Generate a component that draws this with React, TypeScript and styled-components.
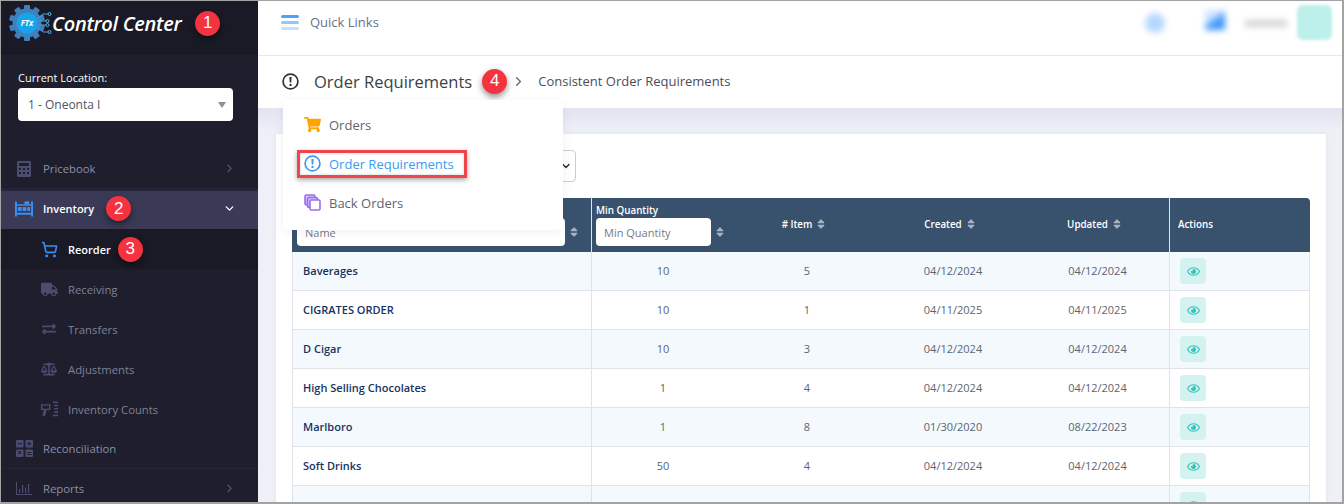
import React from 'react';
import styled, { createGlobalStyle } from 'styled-components';
import { ChevronDown, ChevronRight, ShoppingCart } from 'lucide-react';
import { FaBalanceScale, FaExchangeAlt, FaRegEye, FaShoppingCart, FaSort, FaTruck } from 'react-icons/fa';

const GlobalStyle = createGlobalStyle`
  html, body {
    margin: 0;
    padding: 0;
    background: #fff;
    font-family: "Open Sans", "Noto Sans", sans-serif;
  }
  * {
    box-sizing: border-box;
  }
`;

const Screen = styled.div`
  position: relative;
  display: flex;
  width: 1344px;
  height: 504px;
  overflow: hidden;
  border: 1px solid #a3a3a3;
  border-width: 1px 2px 2px 1px;
`;

const Sidebar = styled.aside`
  flex: 0 0 257px;
  display: flex;
  flex-direction: column;
  background: #1e1e2d;
`;

const Brand = styled.div`
  flex: 0 0 54px;
  display: flex;
  align-items: center;
  padding: 0 0 10px 8px;
  background: #1a1a27;
`;

const BrandName = styled.span`
  margin-left: -1px;
  color: #fff;
  font-size: 20px;
  font-style: italic;
  font-weight: 600;
  letter-spacing: -0.3px;
`;

const Badge = styled.span<{ $left: number }>`
  flex: none;
  display: flex;
  align-items: center;
  justify-content: center;
  width: 25px;
  height: 25px;
  margin-left: ${(p) => p.$left}px;
  border-radius: 50%;
  background: #f5333f;
  color: #fff;
  font-family: "Liberation Sans", Arial, sans-serif;
  font-size: 17px;
  font-weight: 400;
  box-shadow: 0 3px 6px rgba(0, 0, 0, 0.45);
`;

const Location = styled.div`
  flex: none;
  display: flex;
  flex-direction: column;
  height: 94px;
  padding: 15px 25px 0 17px;
`;

const LocationLabel = styled.label`
  color: #fff;
  font-size: 11px;
  line-height: 15px;
  margin-bottom: 3px;
`;

const LocationSelect = styled.div`
  display: flex;
  align-items: center;
  justify-content: space-between;
  height: 33px;
  padding: 0 7px 0 10px;
  border-radius: 4px;
  background: #fff;
  color: #4a5568;
  font-size: 12px;
`;

const Caret = styled.span`
  width: 0;
  height: 0;
  border-left: 4px solid transparent;
  border-right: 4px solid transparent;
  border-top: 6px solid #8a8f99;
`;

const Nav = styled.nav`
  flex: none;
  display: flex;
  flex-direction: column;
`;

const NavItem = styled.div<{ $active?: boolean }>`
  display: flex;
  align-items: center;
  height: ${(p) => (p.$active ? 38 : 39)}px;
  padding: 0 22px ${(p) => (p.$active ? 3 : 0)}px 14px;
  background: ${(p) => (p.$active ? '#3a3a57' : 'transparent')};
  color: ${(p) => (p.$active ? '#fff' : '#8d8fa8')};
  font-size: ${(p) => (p.$active ? 11 : 11.3)}px;
  font-weight: ${(p) => (p.$active ? 600 : 400)};
`;

const SubItem = styled.div<{ $active?: boolean }>`
  display: flex;
  align-items: center;
  height: 40px;
  padding-left: 39px;
  background: ${(p) => (p.$active ? '#1a1a27' : 'transparent')};
  color: ${(p) => (p.$active ? '#fff' : '#7f8199')};
  font-size: ${(p) => (p.$active ? 11 : 11.3)}px;
  font-weight: ${(p) => (p.$active ? 600 : 400)};
`;

const NavIcon = styled.span<{ $color?: string }>`
  flex: none;
  display: flex;
  align-items: center;
  justify-content: center;
  width: 18px;
  height: 18px;
  margin-right: 10px;
  color: ${(p) => p.$color || '#4b4d70'};
`;

const NavLabel = styled.span`
  white-space: nowrap;
`;

const NavArrow = styled.span<{ $color?: string }>`
  margin-left: auto;
  display: flex;
  color: ${(p) => p.$color || '#54566f'};
`;

const NavRule = styled.div<{ $size?: number }>`
  height: ${(p) => p.$size || 1}px;
  background: #25253a;
`;

const Main = styled.main`
  flex: 1;
  display: flex;
  flex-direction: column;
  min-width: 0;
  background: #eef0f8;
`;

const TopBar = styled.header`
  flex: 0 0 55px;
  display: flex;
  align-items: flex-start;
  padding: 6px 10px 0 23px;
  border-bottom: 1px solid #e8e8ec;
  background: #fff;
`;

const QuickLinks = styled.div`
  display: flex;
  align-items: center;
  height: 30px;
  gap: 11px;
  color: #6a7189;
  font-size: 13px;
`;

const Burger = styled.span`
  display: flex;
  flex-direction: column;
  gap: 3px;
  width: 18px;

  i {
    height: 3px;
    border-radius: 2px;
    background: #4aa3f5;
  }
  i:nth-child(2) {
    background: #90c8f9;
  }
  i:nth-child(3) {
    background: #c4e1fc;
  }
`;

const TopRight = styled.div`
  margin-left: auto;
  display: flex;
  align-items: flex-start;
`;

const BlurDot = styled.span`
  width: 20px;
  height: 20px;
  margin: 6px 0 0;
  border-radius: 50%;
  background: #b5d8fd;
  filter: blur(3px);
`;

const BlurFlag = styled.span`
  width: 20px;
  height: 20px;
  margin: 3px 0 0 40px;
  background: linear-gradient(145deg, #cfe5ff 35%, #3d96fb 60%);
  filter: blur(3px);
`;

const BlurName = styled.span`
  width: 42px;
  height: 7px;
  margin: 13px 0 0 20px;
  background: #d4d4d8;
  filter: blur(3px);
`;

const BlurAvatar = styled.span`
  width: 35px;
  height: 35px;
  margin: -2px 0 0 10px;
  border-radius: 6px;
  background: #bdf0ea;
  filter: blur(1.5px);
`;

const SubHeader = styled.div`
  flex: 0 0 52px;
  display: flex;
  align-items: center;
  padding: 0 0 2px 24px;
  background: #fff;
`;

const TitleIcon = styled.span`
  display: flex;
  margin-right: 15px;
  color: #2f3136;
`;

const PageTitle = styled.h1`
  margin: 0;
  color: #3b3f46;
  font-size: 16.5px;
  font-weight: 500;
`;

const Crumb = styled.span`
  margin-left: 12px;
  color: #4a4e57;
  font-size: 13px;
`;

const CrumbArrow = styled.span`
  display: flex;
  margin-left: 4px;
  color: #70737b;
`;

const Body = styled.div`
  flex: 1;
  min-height: 0;
  padding: 26px 16px 0 18px;
  background: linear-gradient(#e1e3ef, #eef0f8 24px);
`;

const Card = styled.section`
  height: 500px;
  padding: 16px 16px 0;
  background: #fff;
  box-shadow: 0 0 4px rgba(90, 90, 130, 0.1);
`;

const FilterRow = styled.div`
  height: 48px;
`;

const FilterSelect = styled.div`
  display: flex;
  align-items: center;
  justify-content: flex-end;
  width: 284px;
  height: 32px;
  padding-right: 3px;
  border: 1px solid #c9ccd2;
  border-radius: 4px;
  color: #2d3036;
`;

const Table = styled.table`
  width: 1018px;
  table-layout: fixed;
  border-collapse: separate;
  border-spacing: 0;
`;

const HeadCell = styled.th<{ $divided?: boolean }>`
  height: 54px;
  padding: 0 9px 2px 4px;
  background: #38526e;
  border-right: ${(p) => (p.$divided ? '1px solid #dfe5eb' : 'none')};
  color: #fff;
  font-size: 9.8px;
  font-weight: 600;
  text-align: center;
  vertical-align: middle;
`;

const FilterHeadCell = styled(HeadCell)<{ $inset: number }>`
  padding: 0 0 0 ${(p) => p.$inset}px;
  text-align: left;
`;

const ActionsHeadCell = styled(HeadCell)`
  padding-left: 8px;
  border-top-right-radius: 4px;
  text-align: left;
`;

const FilterLabel = styled.div`
  margin-bottom: 1px;
  line-height: 13px;
`;

const FilterLine = styled.div`
  display: flex;
  align-items: center;
`;

const FilterInput = styled.div<{ $width: number }>`
  display: flex;
  align-items: center;
  width: ${(p) => p.$width}px;
  height: 28px;
  padding-left: 8px;
  border-radius: 4px;
  background: #fff;
  color: #757a84;
  font-size: 11px;
  font-weight: 400;
`;

const SortMark = styled(FaSort)`
  flex: none;
  margin-left: 3px;
  color: #a7b3c0;
  font-size: 12px;
  vertical-align: -2px;
`;

const Row = styled.tr<{ $odd: boolean }>`
  td {
    background: ${(p) => (p.$odd ? '#f4f9fd' : '#fff')};
  }
`;

const Cell = styled.td<{ $divided?: boolean }>`
  height: 39px;
  padding: 0 0 2px;
  border-bottom: 1px solid #e0e3e8;
  border-right: ${(p) => (p.$divided ? '1px solid #e0e3e8' : 'none')};
  color: #5d6470;
  font-size: 11px;
  text-align: center;
`;

const NameCell = styled(Cell)`
  padding-left: 10px;
  border-left: 1px solid #e0e3e8;
  color: #17325f;
  font-weight: 600;
  text-align: left;
`;

const ActionCell = styled(Cell)`
  padding: 0 0 0 10px;
  text-align: left;
`;

const ViewButton = styled.button`
  display: flex;
  align-items: center;
  justify-content: center;
  width: 26px;
  height: 26px;
  padding: 0;
  border: none;
  border-radius: 4px;
  background: #d3f2f0;
  color: #35c4bb;
  font-size: 13px;
`;

const Menu = styled.div`
  position: absolute;
  left: 282px;
  top: 99px;
  display: flex;
  flex-direction: column;
  width: 280px;
  height: 130px;
  padding-top: 5px;
  border-radius: 6px;
  background: #fff;
  box-shadow: 0 2px 8px rgba(70, 70, 110, 0.08);
`;

const MenuItem = styled.div<{ $active?: boolean }>`
  position: relative;
  display: flex;
  align-items: center;
  height: 39px;
  padding-left: 20px;
  color: ${(p) => (p.$active ? '#3a9bf5' : '#60646e')};
  font-size: 13px;
  font-weight: ${(p) => (p.$active ? 500 : 400)};
`;

const MenuIcon = styled.span<{ $color: string }>`
  flex: none;
  display: flex;
  align-items: center;
  justify-content: center;
  width: 18px;
  height: 18px;
  margin-right: 8px;
  color: ${(p) => p.$color};
`;

const Highlight = styled.span`
  position: absolute;
  left: 14px;
  top: 6px;
  width: 170px;
  height: 28px;
  border: 3px solid #f0444f;
  box-shadow: 0 2px 5px rgba(0, 0, 0, 0.35), inset 0 0 3px rgba(0, 0, 0, 0.2);
`;

const AlertIcon = () => (
  <svg width="17" height="17" viewBox="0 0 17 17">
    <circle cx="8.5" cy="8.5" r="7.4" fill="none" stroke="currentColor" strokeWidth="1.7" />
    <path d="M7.4 3.9h2.2l-.3 5.6H7.7z" fill="currentColor" />
    <circle cx="8.5" cy="11.9" r="1.2" fill="currentColor" />
  </svg>
);

const LogoMark = () => (
  <svg width="44" height="40" viewBox="0 0 44 40">
    <g fill="#3f80bd">
      {[0, 36, 72, 108, 144, 180, 216, 252, 288, 324].map((a) => (
        <rect key={a} x="15" y="2" width="6" height="6" rx="1" transform={`rotate(${a} 18 20)`} />
      ))}
      <circle cx="18" cy="20" r="14.5" />
    </g>
    <circle cx="18" cy="20" r="10.5" fill="#16a5ea" />
    <text x="18" y="23" fill="#fff" fontSize="8" fontWeight="700" fontStyle="italic" textAnchor="middle">
      FTx
    </text>
    <g fill="none" stroke="#4f9fd8" strokeWidth="1">
      <path d="M28 16 L34 11 H39" />
      <path d="M29 18 H37" />
      <path d="M29 22 H37" />
      <path d="M28 24 L34 29 H39" />
    </g>
    <g fill="#1e1e2d" stroke="#57b4ea" strokeWidth="1">
      <circle cx="40.5" cy="11" r="1.5" />
      <circle cx="38.5" cy="18" r="1.5" />
      <circle cx="38.5" cy="22" r="1.5" />
      <circle cx="40.5" cy="29" r="1.5" />
    </g>
  </svg>
);

const CalculatorIcon = () => (
  <svg width="14" height="16" viewBox="0 0 14 16" fill="#4b4d70">
    <path
      d="M1.5 0h11A1.5 1.5 0 0 1 14 1.5v13a1.5 1.5 0 0 1-1.5 1.5h-11A1.5 1.5 0 0 1 0 14.5v-13A1.5 1.5 0 0 1 1.5 0zM2 2v3h10V2zM2 7v2h2V7zm4 0v2h2V7zm4 0v2h2V7zM2 11v2h2v-2zm4 0v2h2v-2zm4 0v2h2v-2z"
      fillRule="evenodd"
    />
  </svg>
);

const InventoryIcon = () => (
  <svg width="19" height="16" viewBox="0 0 19 16" fill="#3a8ff0">
    <path d="M0 0h2v16H0zM17 0h2v16h-2zM2 12h15v2H2zM2 3h15v1.6H2z" />
    <rect x="3" y="6" width="4" height="4" />
    <rect x="8" y="6" width="4" height="4" />
    <rect x="13" y="6" width="3" height="4" />
    <rect x="10" y="0" width="5" height="3" />
  </svg>
);

const ScannerIcon = () => (
  <svg width="19" height="16" viewBox="0 0 19 16" fill="#4b4d70">
    <path d="M1 3h10v6H7l-1.5 6H2.5L4 9H1z M2.5 4.3v3.4h7V4.3z" fillRule="evenodd" />
    <path d="M13.5 0H19v1.6h-5.5zM15 3.5h4v1.6h-4zM15 7h4v1.6h-4zM15 10.5h4v1.6h-4zM13.5 14H19v1.6h-5.5z" />
  </svg>
);

const ReconcileIcon = () => (
  <svg width="17" height="17" viewBox="0 0 17 17" fill="#4b4d70">
    <rect width="7.5" height="7.5" rx="1" />
    <rect x="9.5" width="7.5" height="7.5" rx="1" />
    <rect y="9.5" width="7.5" height="7.5" rx="1" />
    <rect x="9.5" y="9.5" width="7.5" height="7.5" rx="1" />
    <path d="M1.5 3.2h4.5v1H1.5zM12.7 1.5h1v1.8h1.8v1h-1.8v1.8h-1V4.3h-1.8v-1h1.8zM11 12h4.5v1H11zM11 14h4.5v1H11zM2 11.5l.7-.7 1 1 1-1 .7.7-1 1 1 1-.7.7-1-1-1 1-.7-.7 1-1z" fill="#1e1e2d" />
  </svg>
);

const ChartIcon = () => (
  <svg width="16" height="13" viewBox="0 0 16 13" fill="#4b4d70">
    <path d="M0 0h1v12h15v1H0z" />
    <path d="M3 7h1.2v4H3zM6 3h1.2v8H6zM9 5.5h1.2V11H9zM12 2h1.2v9H12z" />
  </svg>
);

const BackOrdersIcon = () => (
  <svg width="17" height="17" viewBox="0 0 17 17" fill="none" stroke="#9a6cf0" strokeWidth="1.6">
    <rect x="1" y="1" width="10" height="10" rx="1.5" fill="#d9c8fb" />
    <rect x="3.5" y="3.5" width="10" height="10" rx="1.5" fill="#d9c8fb" />
    <rect x="6" y="6" width="10" height="10" rx="1" fill="#fff" />
  </svg>
);

const rows = [
  { name: 'Baverages', min: '10', items: '5', created: '04/12/2024', updated: '04/12/2024' },
  { name: 'CIGRATES ORDER', min: '10', items: '1', created: '04/11/2025', updated: '04/11/2025' },
  { name: 'D Cigar', min: '10', items: '3', created: '04/12/2024', updated: '04/12/2024' },
  { name: 'High Selling Chocolates', min: '1', items: '4', created: '04/12/2024', updated: '04/12/2024' },
  { name: 'Marlboro', min: '1', items: '8', created: '01/30/2020', updated: '08/22/2023' },
  { name: 'Soft Drinks', min: '50', items: '4', created: '04/12/2024', updated: '04/12/2024' },
  { name: '', min: '', items: '', created: '', updated: '' },
];

const App = () => (
  <Screen>
    <GlobalStyle />
    <Sidebar>
      <Brand>
        <LogoMark />
        <BrandName>Control Center</BrandName>
        <Badge $left={14}>1</Badge>
      </Brand>
      <Location>
        <LocationLabel>Current Location:</LocationLabel>
        <LocationSelect>
          1 - Oneonta I
          <Caret />
        </LocationSelect>
      </Location>
      <Nav>
        <NavItem>
          <NavIcon>
            <CalculatorIcon />
          </NavIcon>
          <NavLabel>Pricebook</NavLabel>
          <NavArrow>
            <ChevronRight size={13} />
          </NavArrow>
        </NavItem>
        <NavRule $size={3} />
        <NavItem $active>
          <NavIcon $color="#3a8ff0">
            <InventoryIcon />
          </NavIcon>
          <NavLabel>Inventory</NavLabel>
          <Badge $left={12}>2</Badge>
          <NavArrow $color="#fff">
            <ChevronDown size={13} strokeWidth={2.5} />
          </NavArrow>
        </NavItem>
        <SubItem $active>
          <NavIcon $color="#3a8ff0">
            <ShoppingCart size={17} strokeWidth={2.2} />
          </NavIcon>
          <NavLabel>Reorder</NavLabel>
          <Badge $left={7}>3</Badge>
        </SubItem>
        <SubItem>
          <NavIcon>
            <FaTruck size={17} />
          </NavIcon>
          <NavLabel>Receiving</NavLabel>
        </SubItem>
        <SubItem>
          <NavIcon>
            <FaExchangeAlt size={14} />
          </NavIcon>
          <NavLabel>Transfers</NavLabel>
        </SubItem>
        <SubItem>
          <NavIcon>
            <FaBalanceScale size={16} />
          </NavIcon>
          <NavLabel>Adjustments</NavLabel>
        </SubItem>
        <SubItem>
          <NavIcon>
            <ScannerIcon />
          </NavIcon>
          <NavLabel>Inventory Counts</NavLabel>
        </SubItem>
        <NavItem>
          <NavIcon>
            <ReconcileIcon />
          </NavIcon>
          <NavLabel>Reconciliation</NavLabel>
        </NavItem>
        <NavRule />
        <NavItem>
          <NavIcon>
            <ChartIcon />
          </NavIcon>
          <NavLabel>Reports</NavLabel>
          <NavArrow>
            <ChevronRight size={13} />
          </NavArrow>
        </NavItem>
      </Nav>
    </Sidebar>
    <Main>
      <TopBar>
        <QuickLinks>
          <Burger>
            <i />
            <i />
            <i />
          </Burger>
          Quick Links
        </QuickLinks>
        <TopRight>
          <BlurDot />
          <BlurFlag />
          <BlurName />
          <BlurAvatar />
        </TopRight>
      </TopBar>
      <SubHeader>
        <TitleIcon>
          <AlertIcon />
        </TitleIcon>
        <PageTitle>Order Requirements</PageTitle>
        <Badge $left={10}>4</Badge>
        <CrumbArrow>
          <ChevronRight size={15} strokeWidth={2.5} />
        </CrumbArrow>
        <Crumb>Consistent Order Requirements</Crumb>
      </SubHeader>
      <Body>
        <Card>
          <FilterRow>
            <FilterSelect>
              <ChevronDown size={12} strokeWidth={3} />
            </FilterSelect>
          </FilterRow>
          <Table>
            <colgroup>
              <col width="300" />
              <col width="142" />
              <col width="146" />
              <col width="146" />
              <col width="144" />
              <col width="140" />
            </colgroup>
            <thead>
              <tr>
                <FilterHeadCell $divided $inset={5}>
                  <FilterLabel>Name</FilterLabel>
                  <FilterLine>
                    <FilterInput $width={268}>Name</FilterInput>
                    <SortMark />
                  </FilterLine>
                </FilterHeadCell>
                <FilterHeadCell $inset={4}>
                  <FilterLabel>Min Quantity</FilterLabel>
                  <FilterLine>
                    <FilterInput $width={115}>Min Quantity</FilterInput>
                    <SortMark />
                  </FilterLine>
                </FilterHeadCell>
                <HeadCell>
                  # Item
                  <SortMark />
                </HeadCell>
                <HeadCell>
                  Created
                  <SortMark />
                </HeadCell>
                <HeadCell $divided>
                  Updated
                  <SortMark />
                </HeadCell>
                <ActionsHeadCell>Actions</ActionsHeadCell>
              </tr>
            </thead>
            <tbody>
              {rows.map((row, i) => (
                <Row key={i} $odd={i % 2 === 0}>
                  <NameCell $divided>{row.name}</NameCell>
                  <Cell>{row.min}</Cell>
                  <Cell>{row.items}</Cell>
                  <Cell>{row.created}</Cell>
                  <Cell $divided>{row.updated}</Cell>
                  <ActionCell $divided>
                    <ViewButton>
                      <FaRegEye />
                    </ViewButton>
                  </ActionCell>
                </Row>
              ))}
            </tbody>
          </Table>
        </Card>
      </Body>
    </Main>
    <Menu>
      <MenuItem>
        <MenuIcon $color="#ffa400">
          <FaShoppingCart size={17} />
        </MenuIcon>
        Orders
      </MenuItem>
      <MenuItem $active>
        <MenuIcon $color="#3a9bf5">
          <AlertIcon />
        </MenuIcon>
        Order Requirements
        <Highlight />
      </MenuItem>
      <MenuItem>
        <MenuIcon $color="#9a6cf0">
          <BackOrdersIcon />
        </MenuIcon>
        Back Orders
      </MenuItem>
    </Menu>
  </Screen>
);

export default App;
